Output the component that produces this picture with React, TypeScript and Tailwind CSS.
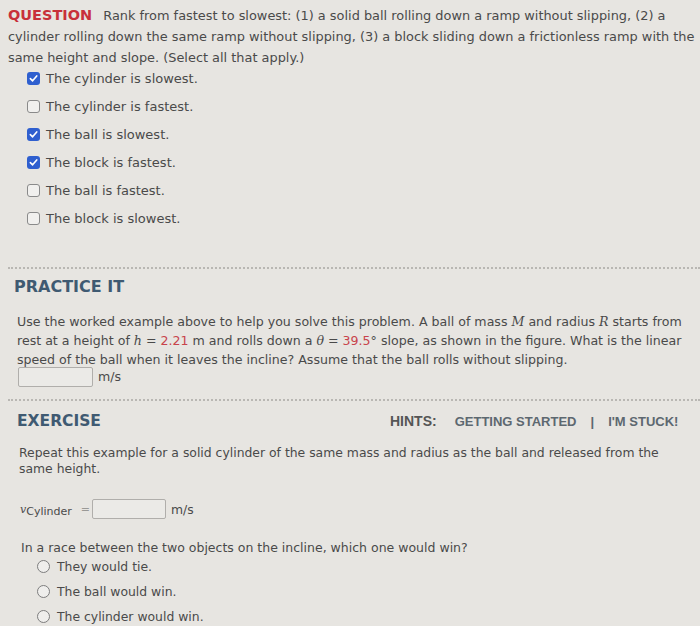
import React from 'react';

const Check = ({ checked }: { checked: boolean }) =>
  checked ? (
    <span className="w-[13px] h-[13px] rounded-[3px] bg-[#2f5fcf] flex items-center justify-center shrink-0">
      <svg width="9" height="9" viewBox="0 0 10 10">
        <path d="M1.5 5.2 L4 7.6 L8.6 2.2" stroke="white" strokeWidth="1.8" fill="none" strokeLinecap="round" strokeLinejoin="round" />
      </svg>
    </span>
  ) : (
    <span className="w-[13px] h-[13px] rounded-[3px] border border-[#8a8a8a] bg-[#f1f0ee] shrink-0" />
  );

const Radio = () => (
  <span className="w-[13px] h-[13px] rounded-full border border-[#7d7d7d] bg-[#efeeec] shrink-0" />
);

const Dotted = () => <div className="border-t-2 border-dotted border-[#b9b7b3] ml-[8px]" />;

const Var = ({ children }: { children: React.ReactNode }) => (
  <i style={{ fontFamily: '"DejaVu Serif", serif' }}>{children}</i>
);

const options: [string, boolean][] = [
  ['The cylinder is slowest.', true],
  ['The cylinder is fastest.', false],
  ['The ball is slowest.', true],
  ['The block is fastest.', true],
  ['The ball is fastest.', false],
  ['The block is slowest.', false],
];

export default function App() {
  return (
    <div className="w-[700px] h-[626px] overflow-hidden bg-[#e7e5e1] text-[#4a4a4a] text-[13px] leading-[21px]" style={{ fontFamily: '"DejaVu Sans", Verdana, sans-serif' }}>
      <div className="pl-[8px] pt-[5px]">
        <p className="text-[12.9px]">
          <span className="font-bold text-[#c8303a] text-[14.5px] mr-[11px]">QUESTION</span>
          Rank from fastest to slowest: (1) a solid ball rolling down a ramp without slipping, (2) a cylinder rolling down the same ramp without slipping, (3) a block sliding down a frictionless ramp with the same height and slope. (Select all that apply.)
        </p>
        <div className="flex flex-col gap-[7px] pl-[19px]">
          {options.map(([t, c]) => (
            <div key={t} className="flex items-center gap-[6px] h-[21px]">
              <Check checked={c} />
              <span>{t}</span>
            </div>
          ))}
        </div>
      </div>

      <div className="mt-[38px]">
        <Dotted />
      </div>

      <div className="pl-[14px] pr-[11px]">
        <h2 className="font-bold text-[16px] text-[#3f5a72] mt-[7px] leading-[22px]">PRACTICE IT</h2>
        <p className="mt-[14px] pl-[3px] leading-[19px] text-[12.6px]">
          Use the worked example above to help you solve this problem. A ball of mass <Var>M</Var> and radius <Var>R</Var> starts from rest at a height of <Var>h</Var> = <span className="text-[#c8434b]">2.21</span> m and rolls down a <Var>θ</Var> = <span className="text-[#c8434b]">39.5</span>° slope, as shown in the figure. What is the linear speed of the ball when it leaves the incline? Assume that the ball rolls without slipping.
        </p>
        <div className="flex items-center gap-[5px] pl-[4px] mt-[-3px]">
          <span className="w-[75px] h-[20px] border border-[#b0aeab] bg-[#ebeae7] rounded-[2px]" />
          <span className="text-[12.6px]">m/s</span>
        </div>
      </div>

      <div className="mt-[12px]">
        <Dotted />
      </div>

      <div className="pl-[17px] pr-[10px]">
        <div className="flex items-center mt-[9px] h-[22px]">
          <h2 className="font-bold text-[15.5px] text-[#3f5a72] w-[373px]">EXERCISE</h2>
          <div className="flex items-center text-[13px] font-bold" style={{ fontFamily: '"Liberation Sans", Arial, sans-serif' }}>
            <span className="text-[#555555] mr-[18px] text-[14px]">HINTS:</span>
            <span className="text-[#5d6870]">GETTING STARTED</span>
            <span className="text-[#5d6870] mx-[14px]">|</span>
            <span className="text-[#5d6870]">I'M STUCK!</span>
          </div>
        </div>
        <p className="mt-[13px] pl-[2px] leading-[16px] text-[12.4px]">
          Repeat this example for a solid cylinder of the same mass and radius as the ball and released from the same height.
        </p>
        <div className="flex items-center mt-[21px] pl-[3px] h-[22px]">
          <span className="text-[11px]">
            <Var>v</Var>
            <sub className="text-[11px]">Cylinder</sub>
          </span>
          <span className="ml-[9px] text-[#9a9996] text-[11px]">=</span>
          <span className="ml-[2px] w-[74px] h-[20px] border border-[#b0aeab] bg-[#ebeae7] rounded-[2px]" />
          <span className="ml-[5px] text-[12.4px]">m/s</span>
        </div>
        <p className="mt-[17px] pl-[4px] text-[12.5px]">In a race between the two objects on the incline, which one would win?</p>
        <div className="flex flex-col gap-[5px] pl-[20px] mt-[-2px]">
          {['They would tie.', 'The ball would win.', 'The cylinder would win.'].map((t) => (
            <div key={t} className="flex items-center gap-[7px] h-[20px] text-[12.4px]">
              <Radio />
              <span>{t}</span>
            </div>
          ))}
        </div>
      </div>
    </div>
  );
}
